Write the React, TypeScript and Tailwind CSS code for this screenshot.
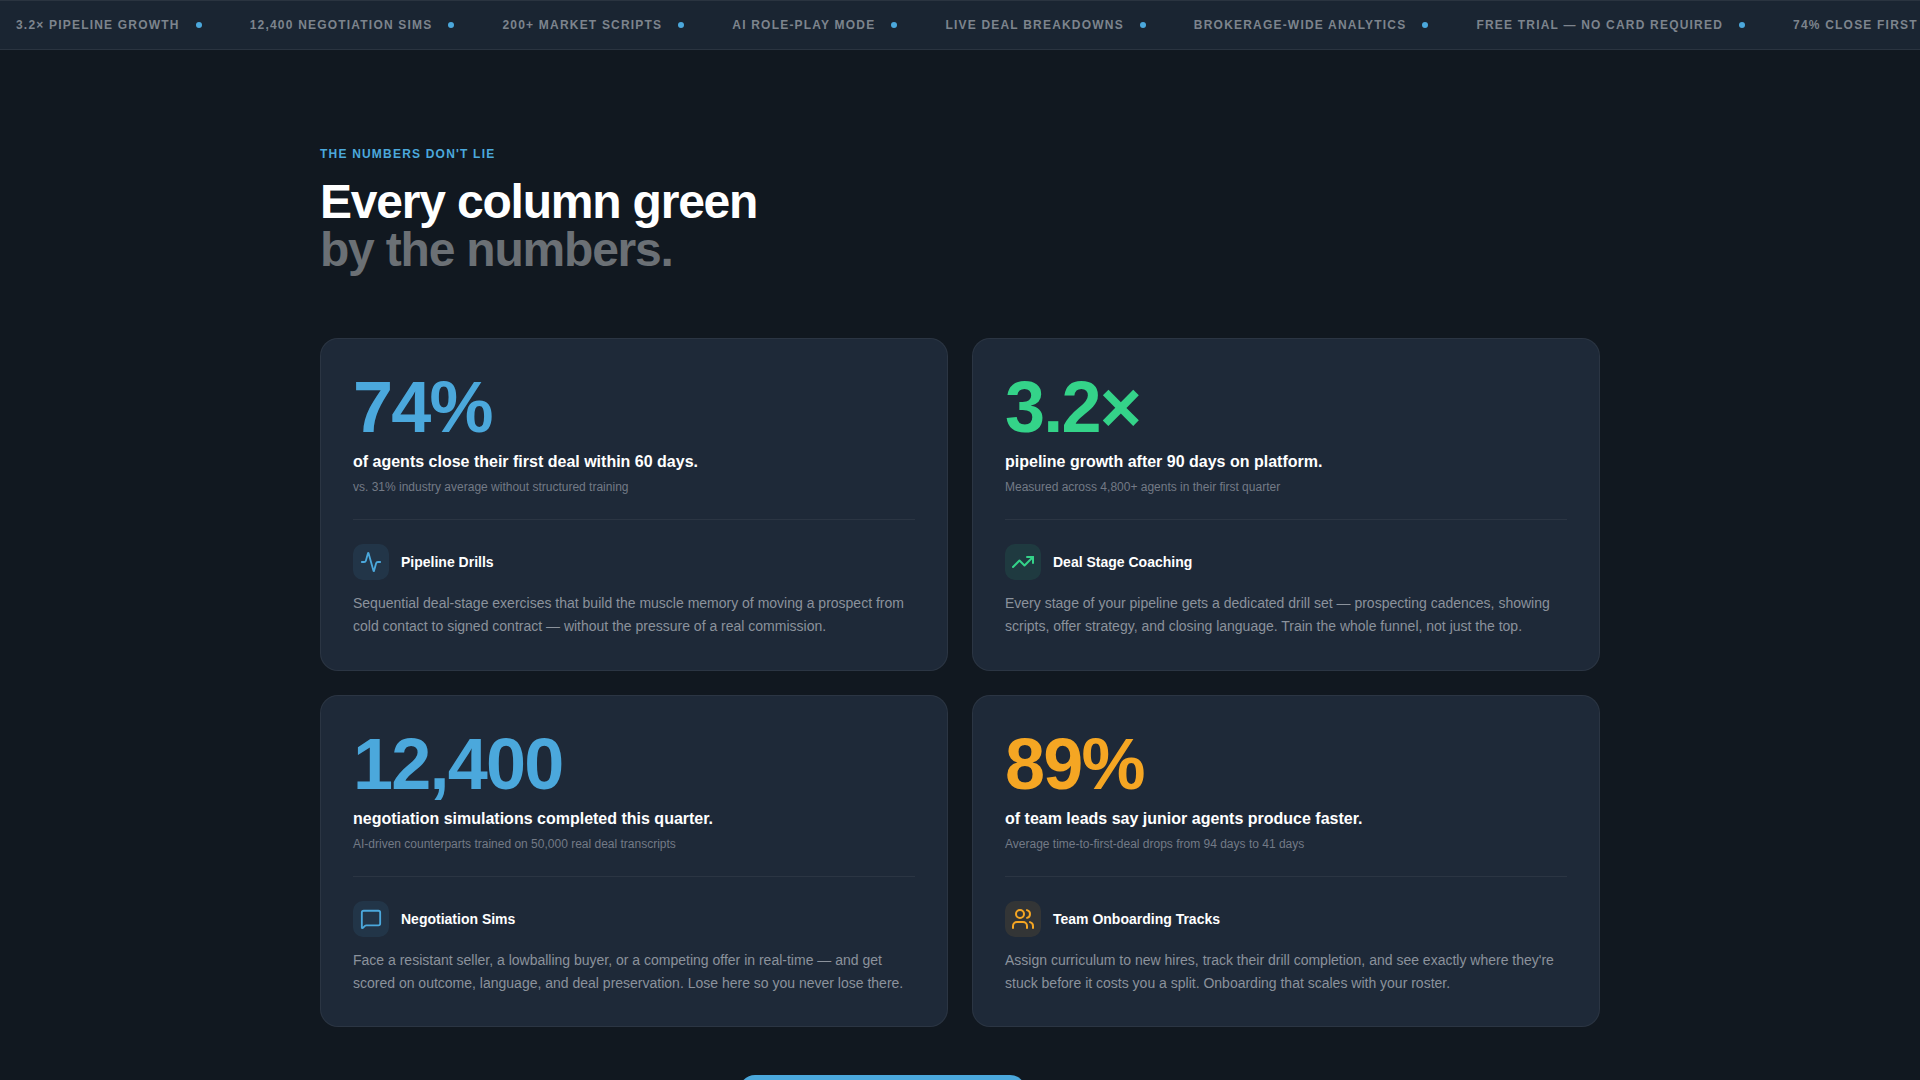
import { Activity, MessageSquare, TrendingUp, Users, type LucideIcon } from 'lucide-react';

type Stat = {
  value: string;
  label: string;
  note: string;
  title: string;
  body: string;
  icon: LucideIcon;
  iconSize: number;
  valueClass: string;
  boxClass: string;
};

const TICKER = [
  '3.2× Pipeline Growth',
  '12,400 Negotiation Sims',
  '200+ Market Scripts',
  'AI Role-Play Mode',
  'Live Deal Breakdowns',
  'Brokerage-Wide Analytics',
  'Free Trial — No Card Required',
  '74% Close First',
];

const STATS: Stat[] = [
  {
    value: '74%',
    label: 'of agents close their first deal within 60 days.',
    note: 'vs. 31% industry average without structured training',
    title: 'Pipeline Drills',
    body: 'Sequential deal-stage exercises that build the muscle memory of moving a prospect from cold contact to signed contract — without the pressure of a real commission.',
    icon: Activity,
    iconSize: 22,
    valueClass: 'text-[#4ba8dc]',
    boxClass: 'bg-[#4ba8dc]/10 text-[#4ba8dc]',
  },
  {
    value: '3.2×',
    label: 'pipeline growth after 90 days on platform.',
    note: 'Measured across 4,800+ agents in their first quarter',
    title: 'Deal Stage Coaching',
    body: 'Every stage of your pipeline gets a dedicated drill set — prospecting cadences, showing scripts, offer strategy, and closing language. Train the whole funnel, not just the top.',
    icon: TrendingUp,
    iconSize: 24,
    valueClass: 'text-[#34d389]',
    boxClass: 'bg-[#34d389]/10 text-[#34d389]',
  },
  {
    value: '12,400',
    label: 'negotiation simulations completed this quarter.',
    note: 'AI-driven counterparts trained on 50,000 real deal transcripts',
    title: 'Negotiation Sims',
    body: 'Face a resistant seller, a lowballing buyer, or a competing offer in real-time — and get scored on outcome, language, and deal preservation. Lose here so you never lose there.',
    icon: MessageSquare,
    iconSize: 22,
    valueClass: 'text-[#4ba8dc]',
    boxClass: 'bg-[#4ba8dc]/10 text-[#4ba8dc]',
  },
  {
    value: '89%',
    label: 'of team leads say junior agents produce faster.',
    note: 'Average time-to-first-deal drops from 94 days to 41 days',
    title: 'Team Onboarding Tracks',
    body: "Assign curriculum to new hires, track their drill completion, and see exactly where they're stuck before it costs you a split. Onboarding that scales with your roster.",
    icon: Users,
    iconSize: 24,
    valueClass: 'text-[#f5a623]',
    boxClass: 'bg-[#f5a623]/10 text-[#f5a623]',
  },
];

function StatCard({ stat }: { stat: Stat }) {
  const Icon = stat.icon;
  return (
    <div className="rounded-[18px] border border-white/[0.06] bg-[#1e2938] p-8">
      <div className={`text-[72px] font-bold leading-none tracking-[-0.025em] ${stat.valueClass}`}>{stat.value}</div>
      <p className="mt-2 text-base font-semibold leading-[1.4] text-white">{stat.label}</p>
      <p className="mt-[5px] text-xs leading-[1.5] text-[#737a86]">{stat.note}</p>
      <div className="mt-[23px] border-t border-white/[0.06] pt-6">
        <div className="flex items-center gap-3">
          <div className={`flex h-9 w-9 items-center justify-center rounded-[10px] ${stat.boxClass}`}>
            <Icon size={stat.iconSize} strokeWidth={2} />
          </div>
          <span className="text-sm font-bold text-white">{stat.title}</span>
        </div>
        <p className="mt-3 text-sm leading-[1.62] text-[#8b929c]">{stat.body}</p>
      </div>
    </div>
  );
}

export default function App() {
  return (
    <div className="h-screen overflow-hidden bg-[#111820] font-['Liberation_Sans',Arial,sans-serif]">
      {/* Ticker */}
      <div className="flex h-[50px] items-center overflow-hidden whitespace-nowrap border-y border-white/[0.07] bg-[#1a2532] pl-4">
        {TICKER.map((item) => (
          <div key={item} className="mr-12 flex shrink-0 items-center gap-4">
            <span className="text-xs font-bold uppercase tracking-[0.1em] text-[#7d848d]">{item}</span>
            <span className="h-1.5 w-1.5 rounded-full bg-[#4ba8dc]" />
          </div>
        ))}
      </div>

      <section className="mx-auto w-[1280px] pt-24">
        <p className="text-xs font-bold uppercase tracking-[0.1em] text-[#4ba8dc]">The numbers don't lie</p>
        <h2 className="mt-4 text-[48px] font-bold leading-[1.0] tracking-[-0.025em] text-white">
          Every column green
          <br />
          <span className="text-[#6b7075]">by the numbers.</span>
        </h2>

        <div className="mt-16 grid grid-cols-2 gap-6">
          {STATS.map((stat) => (
            <StatCard key={stat.title} stat={stat} />
          ))}
        </div>

        <div className="mt-12 pl-[419px]">
          <div className="h-14 w-[287px] rounded-2xl bg-[#4ba8dc]" />
        </div>
      </section>
    </div>
  );
}
